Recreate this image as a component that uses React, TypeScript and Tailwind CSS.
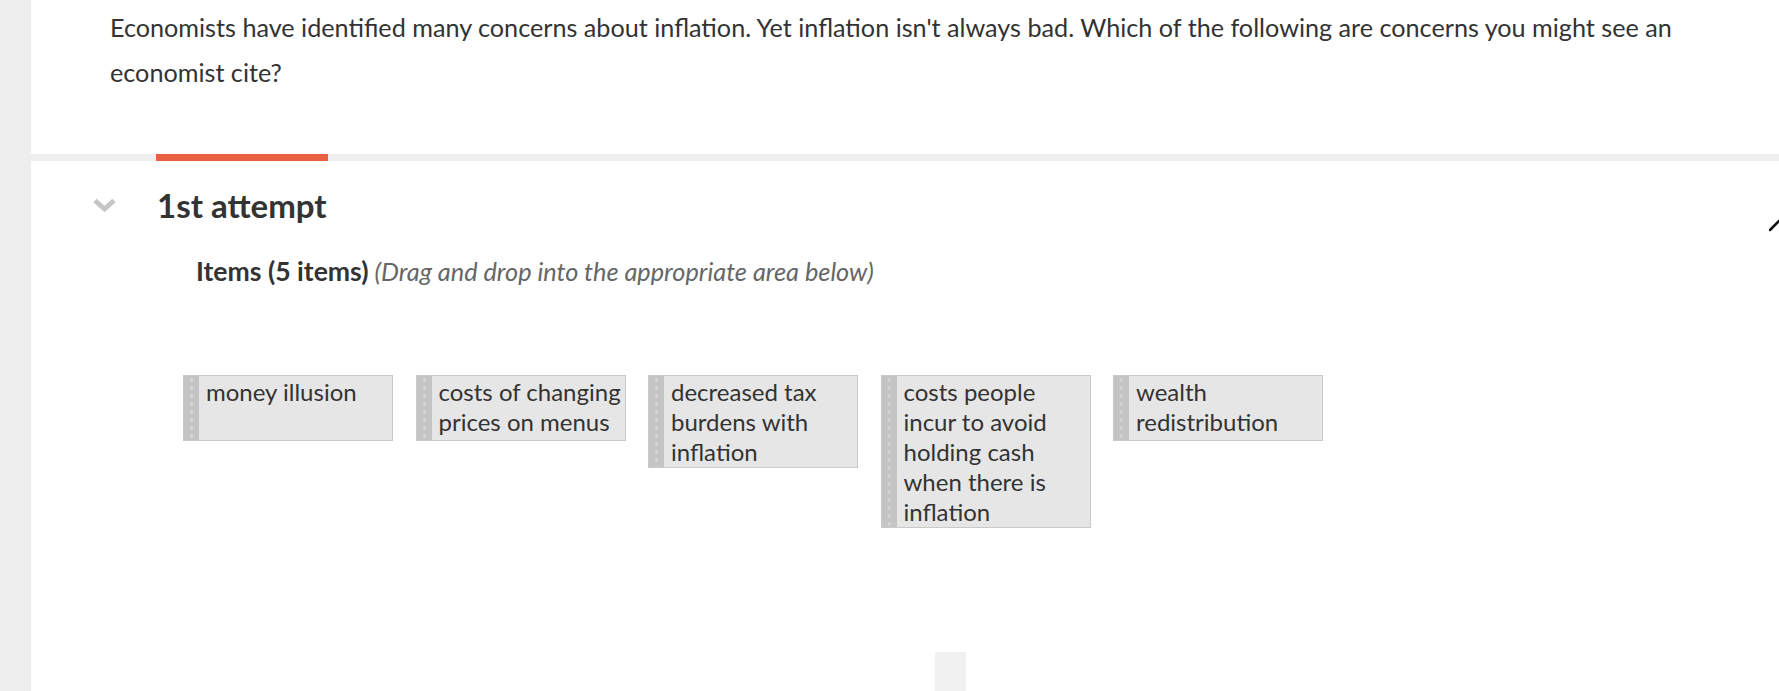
import React from 'react';

const items: string[] = [
  'money illusion',
  'costs of changing prices on menus',
  'decreased tax burdens with inflation',
  'costs people incur to avoid holding cash when there is inflation',
  'wealth redistribution',
];

const Chevron: React.FC = () => (
  <svg width="25" height="16" viewBox="0 0 25 16" className="shrink-0">
    <path d="M3 3.5 L12.5 12 L22 3.5" fill="none" stroke="#c6c6c6" strokeWidth="5" strokeLinecap="butt" strokeLinejoin="miter" />
  </svg>
);

const DragCard: React.FC<{ label: string }> = ({ label }) => (
  <div className="flex w-[210px] min-h-[66px] shrink-0 border border-[#c9c9c9] bg-[#e6e6e6]">
    {/* drag handle */}
    <div className="w-[15px] shrink-0 bg-[#c4c4c4] bg-[radial-gradient(circle,#d3d3d3_1.6px,transparent_2.2px)] bg-[length:15px_8px]"></div>
    <div className="pl-[7px] pt-[1px] text-[24px] leading-[30px] text-[#333]">{label}</div>
  </div>
);

export default function App() {
  return (
    <div className="relative flex h-[691px] w-full overflow-hidden bg-white font-['Lato','Liberation_Sans',sans-serif]">
      <div className="w-[31px] shrink-0 bg-[#eeeeee]"></div>

      <div className="flex flex-1 flex-col">
        {/* question */}
        <div className="h-[154px] pl-[79px] pr-10 pt-[5px]">
          <p className="text-[25.2px] leading-[45px] text-[#333]">
            Economists have identified many concerns about inflation. Yet inflation isn't always bad. Which of the following are concerns you might see an economist cite?
          </p>
        </div>

        {/* tab band */}
        <div className="h-[7px] shrink-0 bg-[#eeeeee]">
          <div className="ml-[125px] h-full w-[172px] bg-[#e8603f]"></div>
        </div>

        {/* attempt */}
        <div className="flex items-center pt-[24px]">
          <div className="ml-[61px] w-[65px]">
            <Chevron />
          </div>
          <h2 className="text-[33px] font-bold leading-[40px] text-[#333]">1st attempt</h2>
        </div>

        <div className="ml-[165px] mt-[29px] leading-[34px]">
          <span className="text-[26.6px] font-bold text-[#333]">Items (5 items)</span>
          <span className="ml-[6px] text-[25.3px] italic text-[#666]">(Drag and drop into the appropriate area below)</span>
        </div>

        <div className="ml-[152px] mt-[83px] flex items-start gap-[22.5px]">
          {items.map((label) => (
            <DragCard key={label} label={label} />
          ))}
        </div>

        <div className="flex-1"></div>
        <div className="ml-[904px] h-[39px] w-[31px] shrink-0 bg-[#f1f1f1]"></div>
      </div>

      {/* mouse pointer clipped at the edge */}
      <svg className="absolute right-0 top-[218px]" width="10" height="14" viewBox="0 0 10 14">
        <path d="M1 12 L10 3" stroke="#111" strokeWidth="2.5" strokeLinecap="round" />
      </svg>
    </div>
  );
}
